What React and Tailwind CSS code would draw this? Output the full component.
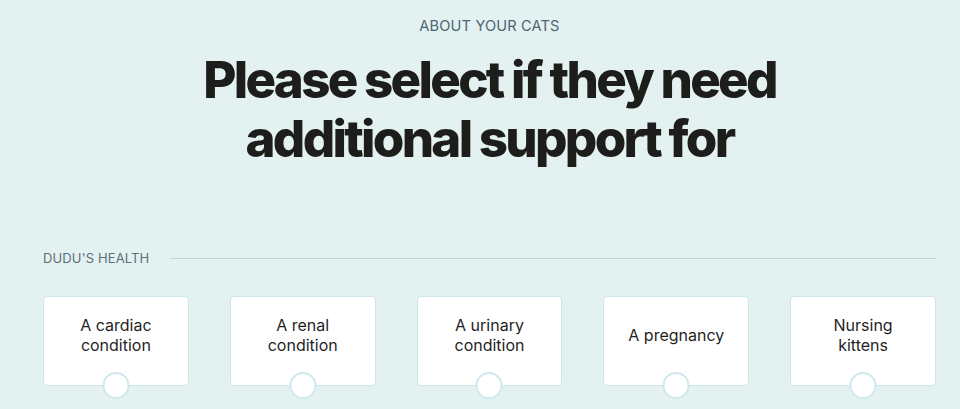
const options = [
  ["A cardiac", "condition"],
  ["A renal", "condition"],
  ["A urinary", "condition"],
  ["A pregnancy"],
  ["Nursing", "kittens"],
];

function OptionCard({ lines }) {
  return (
    <div className="relative h-[90px] rounded-[4px] border border-[#cde6ec] bg-white flex items-center justify-center pb-[13px]">
      <p className="text-center text-[16px] leading-[20px] text-[#1f1f1f]">
        {lines.map((l, i) => (
          <span key={i} className="block">{l}</span>
        ))}
      </p>
      <span className="absolute left-1/2 -bottom-[14px] -translate-x-1/2 w-[27px] h-[27px] rounded-full bg-white border-2 border-[#cfe8ee]" />
    </div>
  );
}

export default function App() {
  return (
    <div
      className="w-[960px] h-[409px] overflow-hidden bg-[#e3f1f1]"
      style={{ fontFamily: "Inter, 'Liberation Sans', sans-serif" }}
    >
      <div className="ml-[43px] w-[893px]">
        <p className="pt-[16px] text-center text-[14.6px] leading-[20px] tracking-[0.01em] text-[#4d6572]">
          ABOUT YOUR CATS
        </p>
        <h1 className="mt-[14px] text-center text-[51px] leading-[59px] font-extrabold tracking-[-0.053em] text-[#1d1d1b]">
          Please select if they need
          <br />
          additional support for
        </h1>
        <div className="mt-[82px] flex items-center gap-[21px]">
          <span className="text-[13px] leading-[16px] text-[#5b6f7b] tracking-[0.01em]">DUDU'S HEALTH</span>
          <div className="flex-1 h-px bg-[#bcd5d8]" />
        </div>
        <div className="mt-[30px] grid grid-cols-5 gap-[41px]">
          {options.map((lines, i) => (
            <OptionCard key={i} lines={lines} />
          ))}
        </div>
      </div>
    </div>
  );
}
